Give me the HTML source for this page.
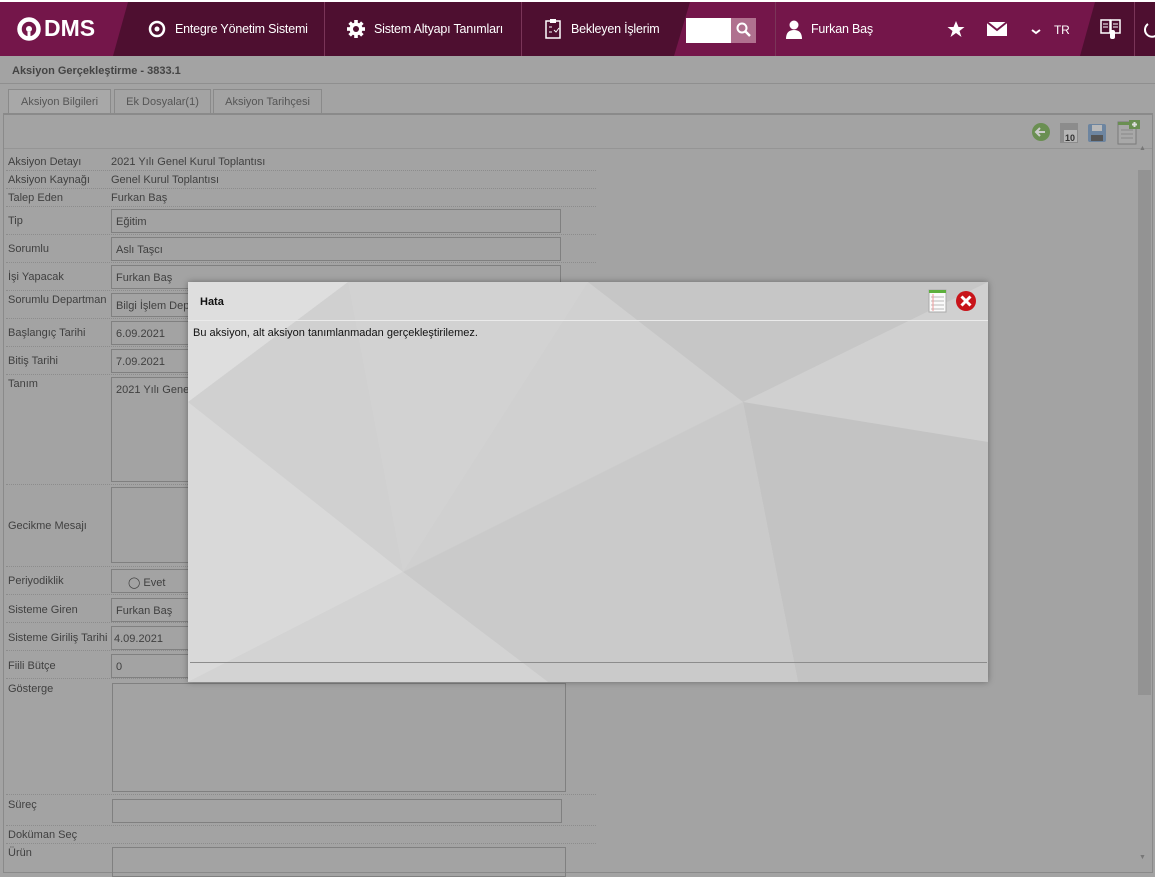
<!DOCTYPE html>
<html><head><meta charset="utf-8"><style>
*{box-sizing:border-box;margin:0;padding:0}
body{width:1155px;height:870px;overflow:hidden;background:#a3a3a3;font-family:"Liberation Sans",sans-serif;font-size:11px;color:#3a3a3a;position:relative}
.abs{position:absolute}
#top{left:0;top:0;width:1155px;height:2px;background:#fff}
#nav{left:0;top:2px;width:1155px;height:54px;background:#4e0f30;color:#fff;font-size:12.5px}
.navt{position:absolute;top:20px;white-space:nowrap;letter-spacing:-0.2px}
.sep{position:absolute;top:0;width:1px;height:54px;background:#7a3558}
.lbl{position:absolute;left:8px;font-size:11px;color:#404040}
.val{position:absolute;left:111px;font-size:11px;color:#404040}
.inp{position:absolute;left:111px;width:450px;height:24px;border:1px solid #808080;padding:6px 0 0 4px;font-size:11px;color:#404040}
.dot{position:absolute;left:6px;width:590px;border-top:1px dotted #8c8c8c}
.tab{position:absolute;top:89px;height:24px;border:1px solid #8a8a8a;border-bottom:none;padding:6px 0 0;text-align:center;font-size:11px;color:#555}
</style></head><body>
<div id="top" class="abs"></div>
<div id="nav" class="abs">
 <svg class="abs" style="left:0;top:0" width="1155" height="54">
  <polygon points="0,0 128,0 113,54 0,54" fill="#74164a"/>
  <polygon points="690,0 775,0 775,54 674,54" fill="#74164a"/>
  <polygon points="775,0 1095,0 1080,54 775,54" fill="#74164a"/>
  <circle cx="29" cy="27" r="9.5" fill="none" stroke="#fff" stroke-width="4.5"/>
  <circle cx="29" cy="27" r="3" fill="#fff"/>
  <path d="M29 30v6h5" stroke="#fff" stroke-width="3" fill="none"/>
  <circle cx="157" cy="27" r="7" fill="none" stroke="#fff" stroke-width="2.5"/>
  <circle cx="157" cy="27" r="2.5" fill="#fff"/>
  <g transform="translate(356,27)" fill="#fff"><circle r="6.5"/>
   <rect x="-1.8" y="-9" width="3.6" height="18"/><rect x="-9" y="-1.8" width="18" height="3.6"/>
   <rect x="-1.8" y="-9" width="3.6" height="18" transform="rotate(45)"/><rect x="-1.8" y="-9" width="3.6" height="18" transform="rotate(-45)"/></g>
  <circle cx="356" cy="27" r="3" fill="#4e0f30"/>
  <rect x="546" y="19" width="14" height="17" fill="none" stroke="#fff" stroke-width="1.5"/>
  <rect x="550" y="17" width="6" height="4" fill="#fff"/>
  <path d="M549 25h3M549 30h3M554 28l2 2 3-4" stroke="#fff" fill="none"/>
  <rect x="686" y="16" width="45" height="25" fill="#fff"/>
  <rect x="731" y="16" width="25" height="25" fill="#b0718f"/>
  <circle cx="742" cy="26" r="4.5" fill="none" stroke="#fff" stroke-width="2"/>
  <path d="M745 29l5 5" stroke="#fff" stroke-width="2.5"/>
  <circle cx="794" cy="23" r="4.5" fill="#fff"/><path d="M786 37q0-9 8-9t8 9z" fill="#fff"/>
  <polygon points="956,19 958.5,25 964.5,25 959.5,29 961.5,35 956,31 950.5,35 952.5,29 947.5,25 953.5,25" fill="#fff"/>
  <rect x="987" y="20" width="20" height="14" fill="#fff"/><path d="M987 20l10 8 10-8" stroke="#74164a" stroke-width="2" fill="none"/>
  <path d="M1032 28l4 3 4-3" stroke="#fff" stroke-width="2" fill="none"/>
  <rect x="1101" y="18" width="9" height="13" fill="none" stroke="#fff" stroke-width="1.5"/><rect x="1111" y="18" width="9" height="13" fill="none" stroke="#fff" stroke-width="1.5"/>
  <path d="M1103 22h5M1103 25h5M1113 22h5M1113 25h5" stroke="#fff"/>
  <rect x="1110" y="28" width="5" height="9" rx="2" fill="#fff"/>
  <path d="M1148 22a7 7 0 1 0 8 0" stroke="#fff" stroke-width="2" fill="none"/>
 </svg>
 <div class="sep" style="left:324px"></div><div class="sep" style="left:521px"></div><div class="sep" style="left:775px"></div><div class="sep" style="left:1134px"></div>
 <div class="navt" style="left:44px;top:13px;font-size:23px;font-weight:bold;letter-spacing:0">DMS</div>
 <div class="navt" style="left:175px">Entegre Yönetim Sistemi</div>
 <div class="navt" style="left:374px">Sistem Altyapı Tanımları</div>
 <div class="navt" style="left:571px">Bekleyen İşlerim</div>
 <div class="navt" style="left:811px">Furkan Baş</div>
 <div class="navt" style="left:1054px;top:21px;font-size:12px">TR</div>
</div>
<div class="abs" style="left:0;top:56px;width:1155px;height:28px;border-bottom:1px solid #8f8f8f"></div>
<div class="abs" style="left:12px;top:65px;font-weight:bold;font-size:11px;color:#444">Aksiyon Gerçekleştirme - 3833.1</div>
<div class="tab" style="left:8px;width:103px;background:#a8a8a8">Aksiyon Bilgileri</div>
<div class="tab" style="left:114px;width:97px">Ek Dosyalar(1)</div>
<div class="tab" style="left:213px;width:109px">Aksiyon Tarihçesi</div>
<div class="abs" style="left:3px;top:113px;width:1150px;height:760px;border:1px solid #8a8a8a;border-top:2px solid #8a8a8a"></div>
<div class="abs" style="left:4px;top:148px;width:1148px;border-top:1px solid #959595"></div>
<svg class="abs" style="left:1030px;top:118px" width="115" height="28">
 <circle cx="11" cy="14" r="9" fill="#6a8f52"/><path d="M15 14h-8M10 10l-4 4 4 4" stroke="#ccc" stroke-width="2" fill="none"/>
 <rect x="30" y="5" width="18" height="20" fill="#8c8c8c"/><rect x="34" y="12" width="13" height="12" fill="#b5b5b5"/><text x="35" y="23" font-size="9" font-weight="bold" fill="#333" font-family="Liberation Sans">10</text>
 <rect x="58" y="6" width="18" height="18" rx="2" fill="#6d85a0"/><rect x="62" y="7" width="10" height="6" fill="#b8b8b8"/><rect x="61" y="17" width="12" height="6" fill="#555"/>
 <rect x="88" y="4" width="18" height="22" fill="#a8a8a8" stroke="#7a7a7a"/><rect x="88" y="4" width="18" height="3" fill="#6a8f52"/>
 <rect x="99" y="2" width="11" height="9" fill="#6a8f52"/><path d="M104.5 4v5M102 6.5h5" stroke="#ddd" stroke-width="2"/>
 <path d="M91 12h12M91 16h12M91 20h12" stroke="#888"/>
</svg>
<div class="abs" style="left:1138px;top:170px;width:13px;height:525px;background:#939393"></div>
<div class="abs" style="left:1139px;top:145px;font-size:7px;color:#777">▲</div>
<div class="abs" style="left:1139px;top:854px;font-size:7px;color:#777">▼</div>

<div class="lbl" style="top:156px">Aksiyon Detayı</div><div class="val" style="top:156px">2021 Yılı Genel Kurul Toplantısı</div><div class="dot" style="top:170px"></div>
<div class="lbl" style="top:174px">Aksiyon Kaynağı</div><div class="val" style="top:174px">Genel Kurul Toplantısı</div><div class="dot" style="top:188px"></div>
<div class="lbl" style="top:192px">Talep Eden</div><div class="val" style="top:192px">Furkan Baş</div><div class="dot" style="top:206px"></div>
<div class="lbl" style="top:215px">Tip</div><div class="inp" style="top:209px">Eğitim</div><div class="dot" style="top:234px"></div>
<div class="lbl" style="top:243px">Sorumlu</div><div class="inp" style="top:237px">Aslı Taşcı</div><div class="dot" style="top:262px"></div>
<div class="lbl" style="top:271px">İşi Yapacak</div><div class="inp" style="top:265px">Furkan Baş</div><div class="dot" style="top:290px"></div>
<div class="lbl" style="top:294px">Sorumlu Departman</div><div class="inp" style="top:293px">Bilgi İşlem Dep</div><div class="dot" style="top:318px"></div>
<div class="lbl" style="top:327px">Başlangıç Tarihi</div><div class="inp" style="top:321px">6.09.2021</div><div class="dot" style="top:346px"></div>
<div class="lbl" style="top:355px">Bitiş Tarihi</div><div class="inp" style="top:349px">7.09.2021</div><div class="dot" style="top:374px"></div>
<div class="lbl" style="top:378px">Tanım</div><div class="inp" style="top:377px;height:105px">2021 Yılı Genel</div><div class="dot" style="top:484px"></div>
<div class="lbl" style="top:520px">Gecikme Mesajı</div><div class="inp" style="top:487px;height:76px"></div><div class="dot" style="top:566px"></div>
<div class="lbl" style="top:575px">Periyodiklik</div><div class="inp" style="top:569px;padding-left:16px">◯ Evet</div><div class="dot" style="top:594px"></div>
<div class="lbl" style="top:604px">Sisteme Giren</div><div class="inp" style="top:598px">Furkan Baş</div><div class="dot" style="top:622px"></div>
<div class="lbl" style="top:632px">Sisteme Giriliş Tarihi</div><div class="inp" style="top:626px;padding-left:2px">4.09.2021</div><div class="dot" style="top:650px"></div>
<div class="lbl" style="top:660px">Fiili Bütçe</div><div class="inp" style="top:654px">0</div><div class="dot" style="top:678px"></div>
<div class="lbl" style="top:683px">Gösterge</div><div class="inp" style="top:683px;left:112px;width:454px;height:109px"></div><div class="dot" style="top:794px"></div>
<div class="lbl" style="top:799px">Süreç</div><div class="inp" style="top:799px;left:112px;width:450px;height:24px"></div><div class="dot" style="top:825px"></div>
<div class="lbl" style="top:829px">Doküman Seç</div><div class="dot" style="top:843px"></div>
<div class="lbl" style="top:847px">Ürün</div><div class="inp" style="top:847px;left:112px;width:454px;height:30px"></div>

<div class="abs" style="left:188px;top:282px;width:800px;height:400px;background:#d0d0d0;box-shadow:0 0 6px rgba(0,0,0,.35);overflow:hidden">
 <svg class="abs" style="left:0;top:0" width="800" height="400">
  <polygon points="0,0 160,0 0,120" fill="#dedede"/>
  <polygon points="0,120 215,290 0,400" fill="#d9d9d9"/>
  <polygon points="160,0 400,0 215,290" fill="#d2d2d2"/>
  <polygon points="400,0 800,0 555,120" fill="#c6c6c6"/>
  <polygon points="555,120 800,160 800,400 610,400" fill="#c3c3c3"/>
  <polygon points="215,290 555,120 610,400 360,400" fill="#cacaca"/>
  <polygon points="0,400 215,290 360,400" fill="#d3d3d3"/>
 </svg>
 <div class="abs" style="left:12px;top:14px;font-weight:bold;font-size:11px;color:#111">Hata</div>
 <div class="abs" style="left:0;top:38px;width:800px;border-top:1px solid #eaeaea"></div>
 <div class="abs" style="left:5px;top:45px;font-size:11px;color:#111">Bu aksiyon, alt aksiyon tanımlanmadan gerçekleştirilemez.</div>
 <div class="abs" style="left:2px;top:380px;width:797px;border-top:1px solid #8c8c8c"></div>
 <svg class="abs" style="left:740px;top:6px" width="50" height="26">
  <rect x="1" y="2" width="17" height="22" fill="#fafafa" stroke="#aaa"/><rect x="1" y="2" width="17" height="3" fill="#5cb03c"/>
  <path d="M3 9h13M3 13h13M3 17h13M3 21h13" stroke="#bbb"/><path d="M5 6v17" stroke="#e99"/>
  <circle cx="38" cy="13" r="10" fill="#c8141a"/><path d="M33.5 8.5l9 9M42.5 8.5l-9 9" stroke="#fff" stroke-width="3"/>
 </svg>
</div>
</body></html>
